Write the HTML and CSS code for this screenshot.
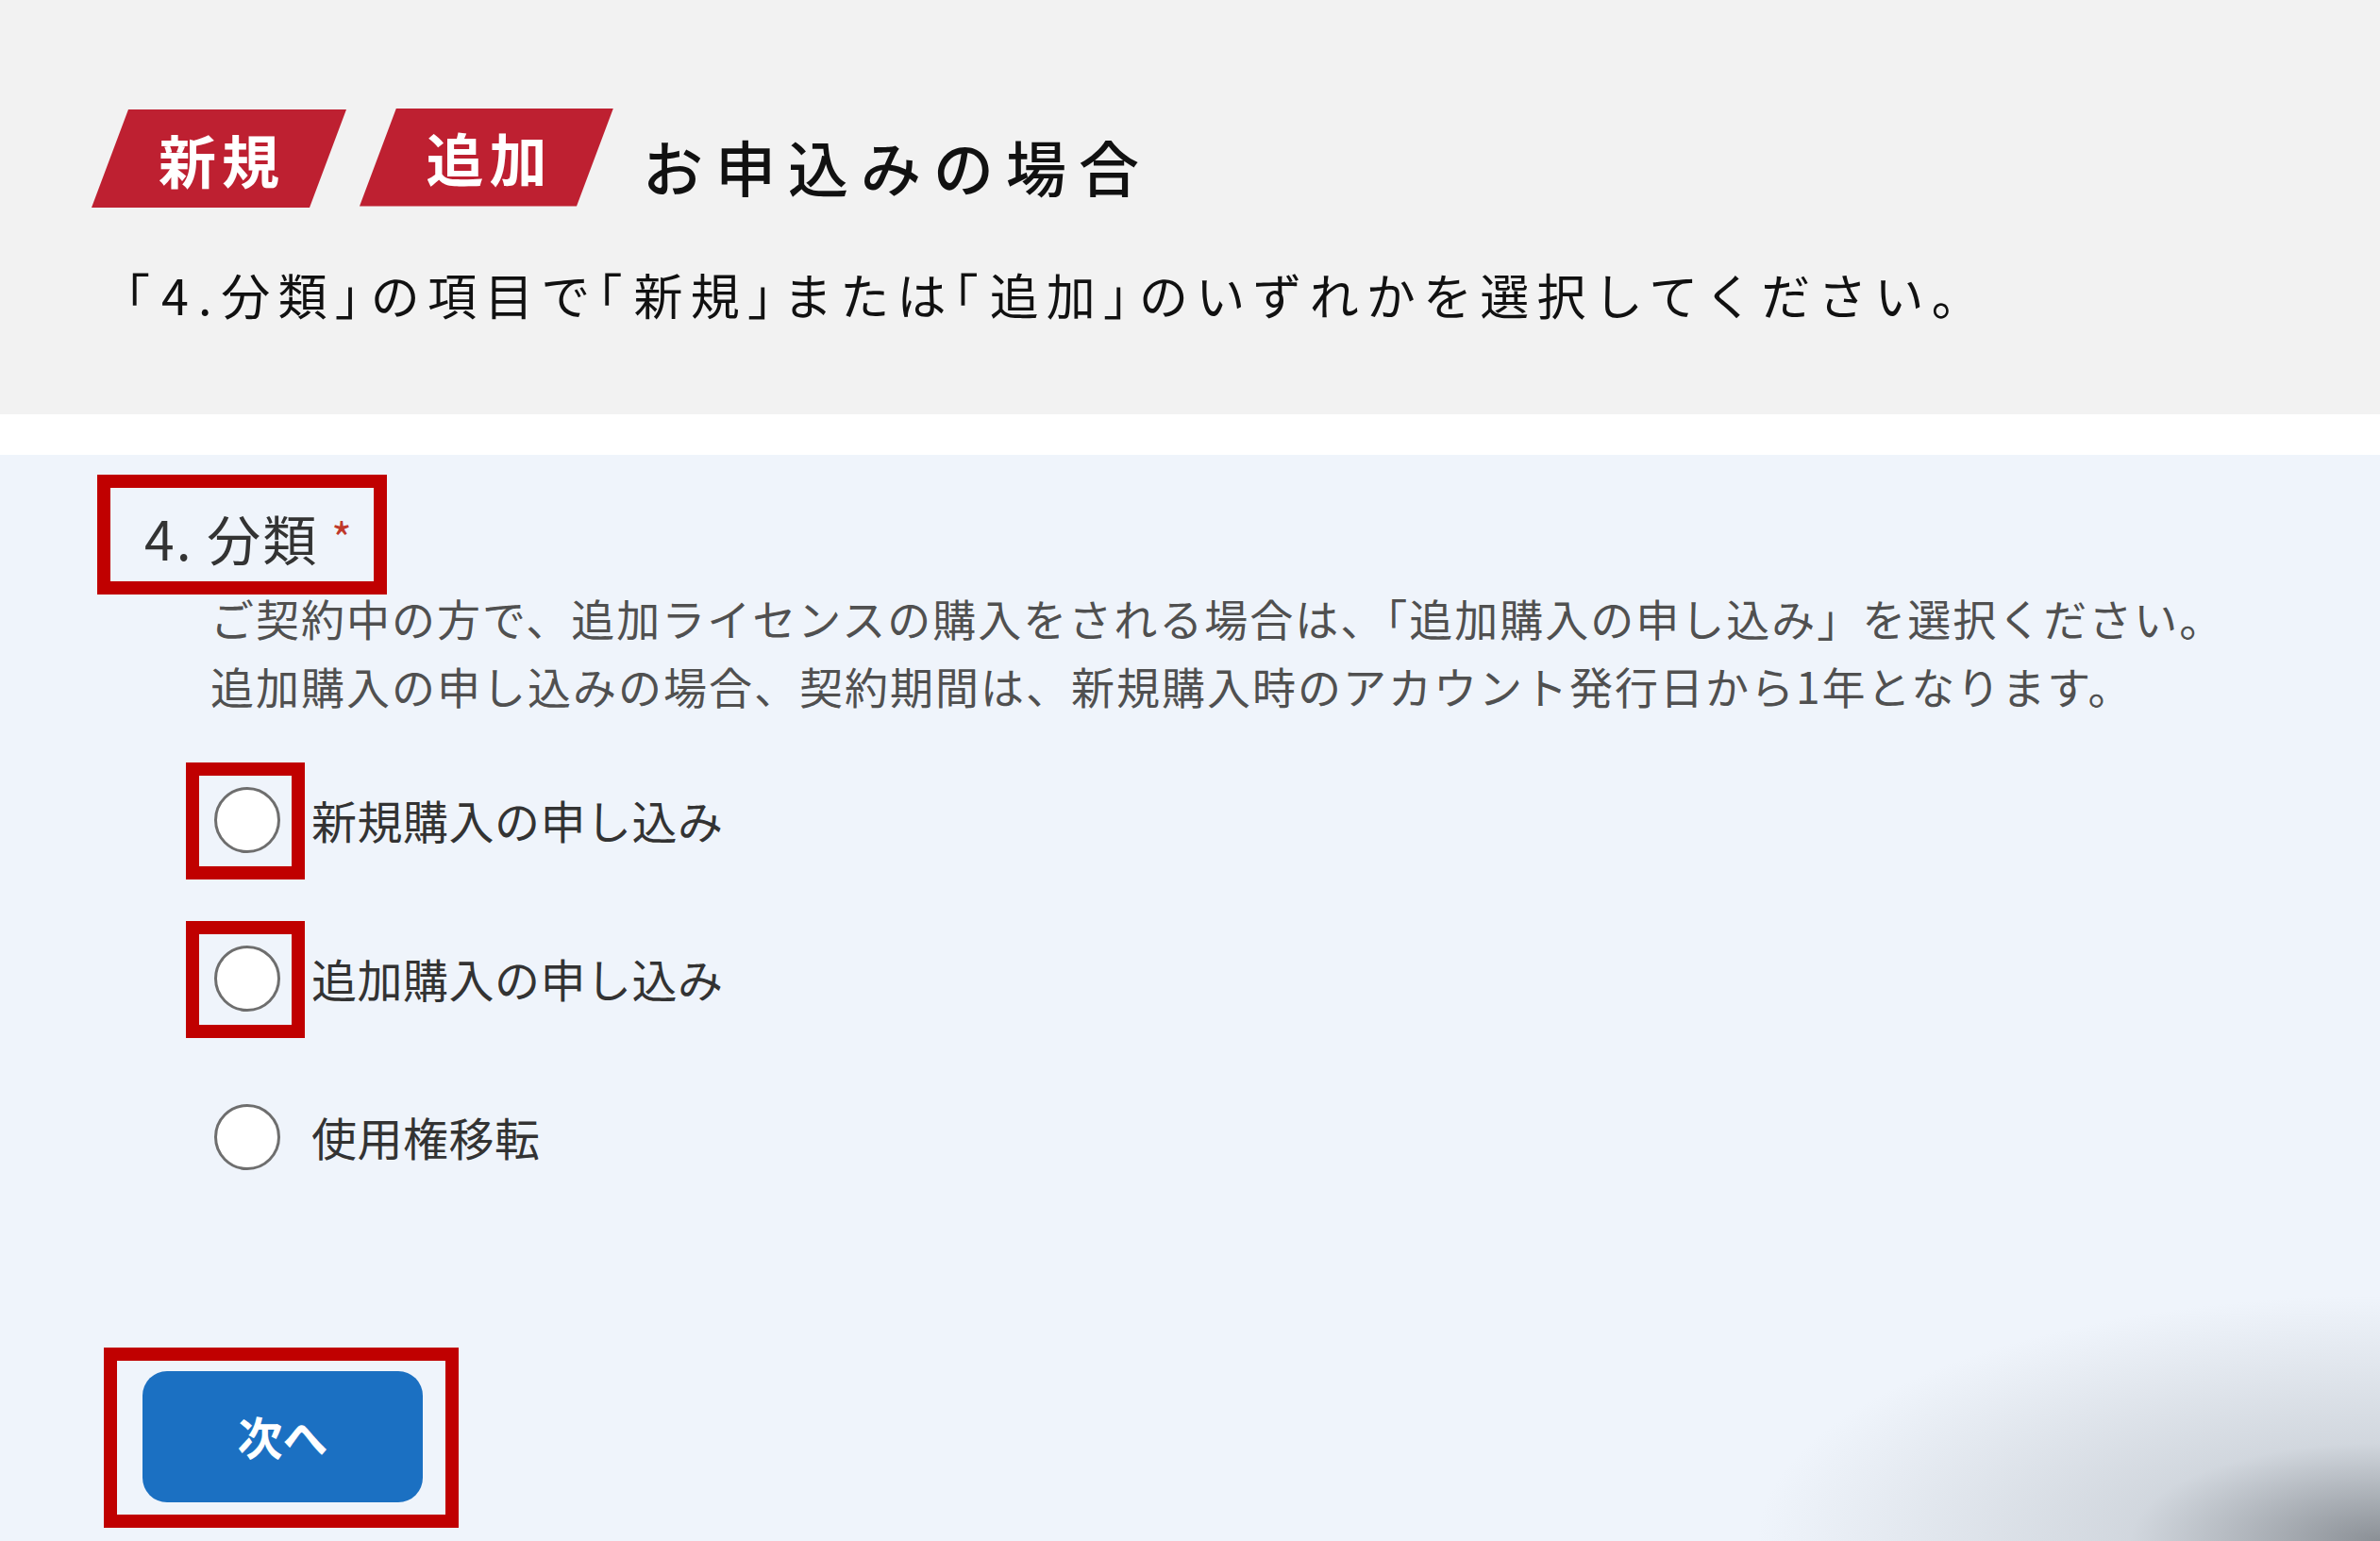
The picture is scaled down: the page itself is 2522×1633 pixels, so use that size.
FILE: index.html
```html
<!DOCTYPE html>
<html lang="ja">
<head>
<meta charset="utf-8">
<title>お申込みの場合</title>
<link rel="stylesheet" href="styles.css">
</head>
<body>
<header class="intro">
  <div class="intro-head">
    <span class="badge badge-first"><span class="badge-text">新規</span></span>
    <span class="badge"><span class="badge-text">追加</span></span>
    <h1 class="intro-title">お申込みの場合</h1>
  </div>
  <p class="intro-lead"><span class="br">「</span><span class="num">4.</span>分類<span class="br">」</span>の項目で<span class="br">「</span>新規<span class="br">」</span>または<span class="br">「</span>追加<span class="br">」</span>のいずれかを選択してください。</p>
</header>

<main class="form">
  <div class="q-head">
    <span class="q-label">4. 分類</span><span class="q-req">*</span>
  </div>
  <p class="q-desc">ご契約中の方で、追加ライセンスの購入をされる場合は、「追加購入の申し込み」を選択ください。<br>追加購入の申し込みの場合、契約期間は、新規購入時のアカウント発行日から1年となります。</p>

  <div class="options">
    <label class="option">
      <span class="radio-wrap marked"><span class="radio"></span></span>
      <span class="option-text">新規購入の申し込み</span>
    </label>
    <label class="option">
      <span class="radio-wrap marked"><span class="radio"></span></span>
      <span class="option-text">追加購入の申し込み</span>
    </label>
    <label class="option">
      <span class="radio-wrap"><span class="radio"></span></span>
      <span class="option-text">使用権移転</span>
    </label>
  </div>

  <div class="next-wrap">
    <button class="next-btn" type="button">次へ</button>
  </div>
</main>
</body>
</html>
```

FILE: styles.css
```css
* {
  box-sizing: border-box;
}

html, body {
  margin: 0;
  padding: 0;
}

body {
  background: #ffffff;
  font-family: "Noto Sans CJK JP", "Noto Sans", sans-serif;
  width: 2522px;
  height: 1633px;
  overflow: hidden;
}

/* ---------- intro (grey) ---------- */
.intro {
  background: #f2f2f2;
  height: 439px;
  padding: 114px 0 0 97px;
}

.intro-head {
  display: flex;
  align-items: center;
  height: 105px;
}

.badge {
  width: 269px;
  height: 104px;
  background: #be2031;
  clip-path: polygon(39px 0, 100% 0, calc(100% - 39px) 100%, 0 100%);
  display: flex;
  align-items: center;
  justify-content: center;
  color: #ffffff;
}

.badge-first {
  margin-top: 3px;
  width: 270px;
  margin-right: 14px;
}

.badge-text {
  font-size: 61px;
  font-weight: 700;
  letter-spacing: 6px;
  line-height: 1;
  padding-left: 6px;
}

.intro-title {
  margin: 16px 0 0 31px;
  font-size: 64px;
  font-weight: 500;
  letter-spacing: 13px;
  line-height: 1;
  color: #111111;
}

.intro-lead {
  margin: 55px 0 0 36px;
  font-size: 52px;
  line-height: 76px;
  letter-spacing: 8.2px;
  color: #111111;
}

.intro-lead .br {
  font-feature-settings: "halt";
  letter-spacing: 12px;
}

.intro-lead .num {
  letter-spacing: 10px;
}

/* ---------- form (light blue) ---------- */
.form {
  margin-top: 43px;
  height: 1151px;
  padding: 21px 0 0 103px;
  background:
    radial-gradient(ellipse 660px 260px at 100% 100%, rgba(130, 135, 141, 0.92) 0%, rgba(185, 191, 198, 0.55) 40%, rgba(239, 244, 251, 0) 100%),
    #eff4fb;
}

.q-head {
  display: inline-flex;
  align-items: center;
  height: 127px;
  border: 14px solid #c00000;
  padding: 0 23px 0 36px;
}

.q-label {
  font-size: 57px;
  line-height: 1;
  letter-spacing: 2px;
  color: #333333;
  margin-top: 6px;
}

.q-req {
  font-size: 46px;
  line-height: 1;
  color: #c0392b;
  margin-left: 14px;
  margin-top: 4px;
}

.q-desc {
  margin: -12px 0 0 120px;
  font-size: 46px;
  line-height: 72px;
  letter-spacing: 2px;
  color: #505050;
}

.options {
  margin: 46px 0 0 94px;
  display: flex;
  flex-direction: column;
  gap: 44px;
}

.option {
  display: flex;
  align-items: center;
}

.radio-wrap {
  display: block;
  border: 14px solid transparent;
  padding: 12px 12px 14px 16px;
}

.radio-wrap.marked {
  border-color: #c00000;
}

.radio {
  display: block;
  width: 70px;
  height: 70px;
  border-radius: 50%;
  background: #ffffff;
  border: 3px solid #6e6e6e;
}

.option-text {
  margin: -5px 0 0 7px;
  font-size: 48px;
  line-height: 1;
  letter-spacing: 0.5px;
  color: #333333;
}

.next-wrap {
  display: inline-block;
  margin: 160px 0 0 7px;
  border: 14px solid #c00000;
  padding: 11px 24px 13px 27px;
}

.next-btn {
  display: block;
  width: 297px;
  height: 139px;
  border: none;
  border-radius: 26px;
  background: #1b70c2;
  color: #ffffff;
  font-family: "Noto Sans CJK JP", "Noto Sans", sans-serif;
  font-size: 48px;
  font-weight: 700;
  line-height: 1;
  padding: 0 0 4px;
}
```
